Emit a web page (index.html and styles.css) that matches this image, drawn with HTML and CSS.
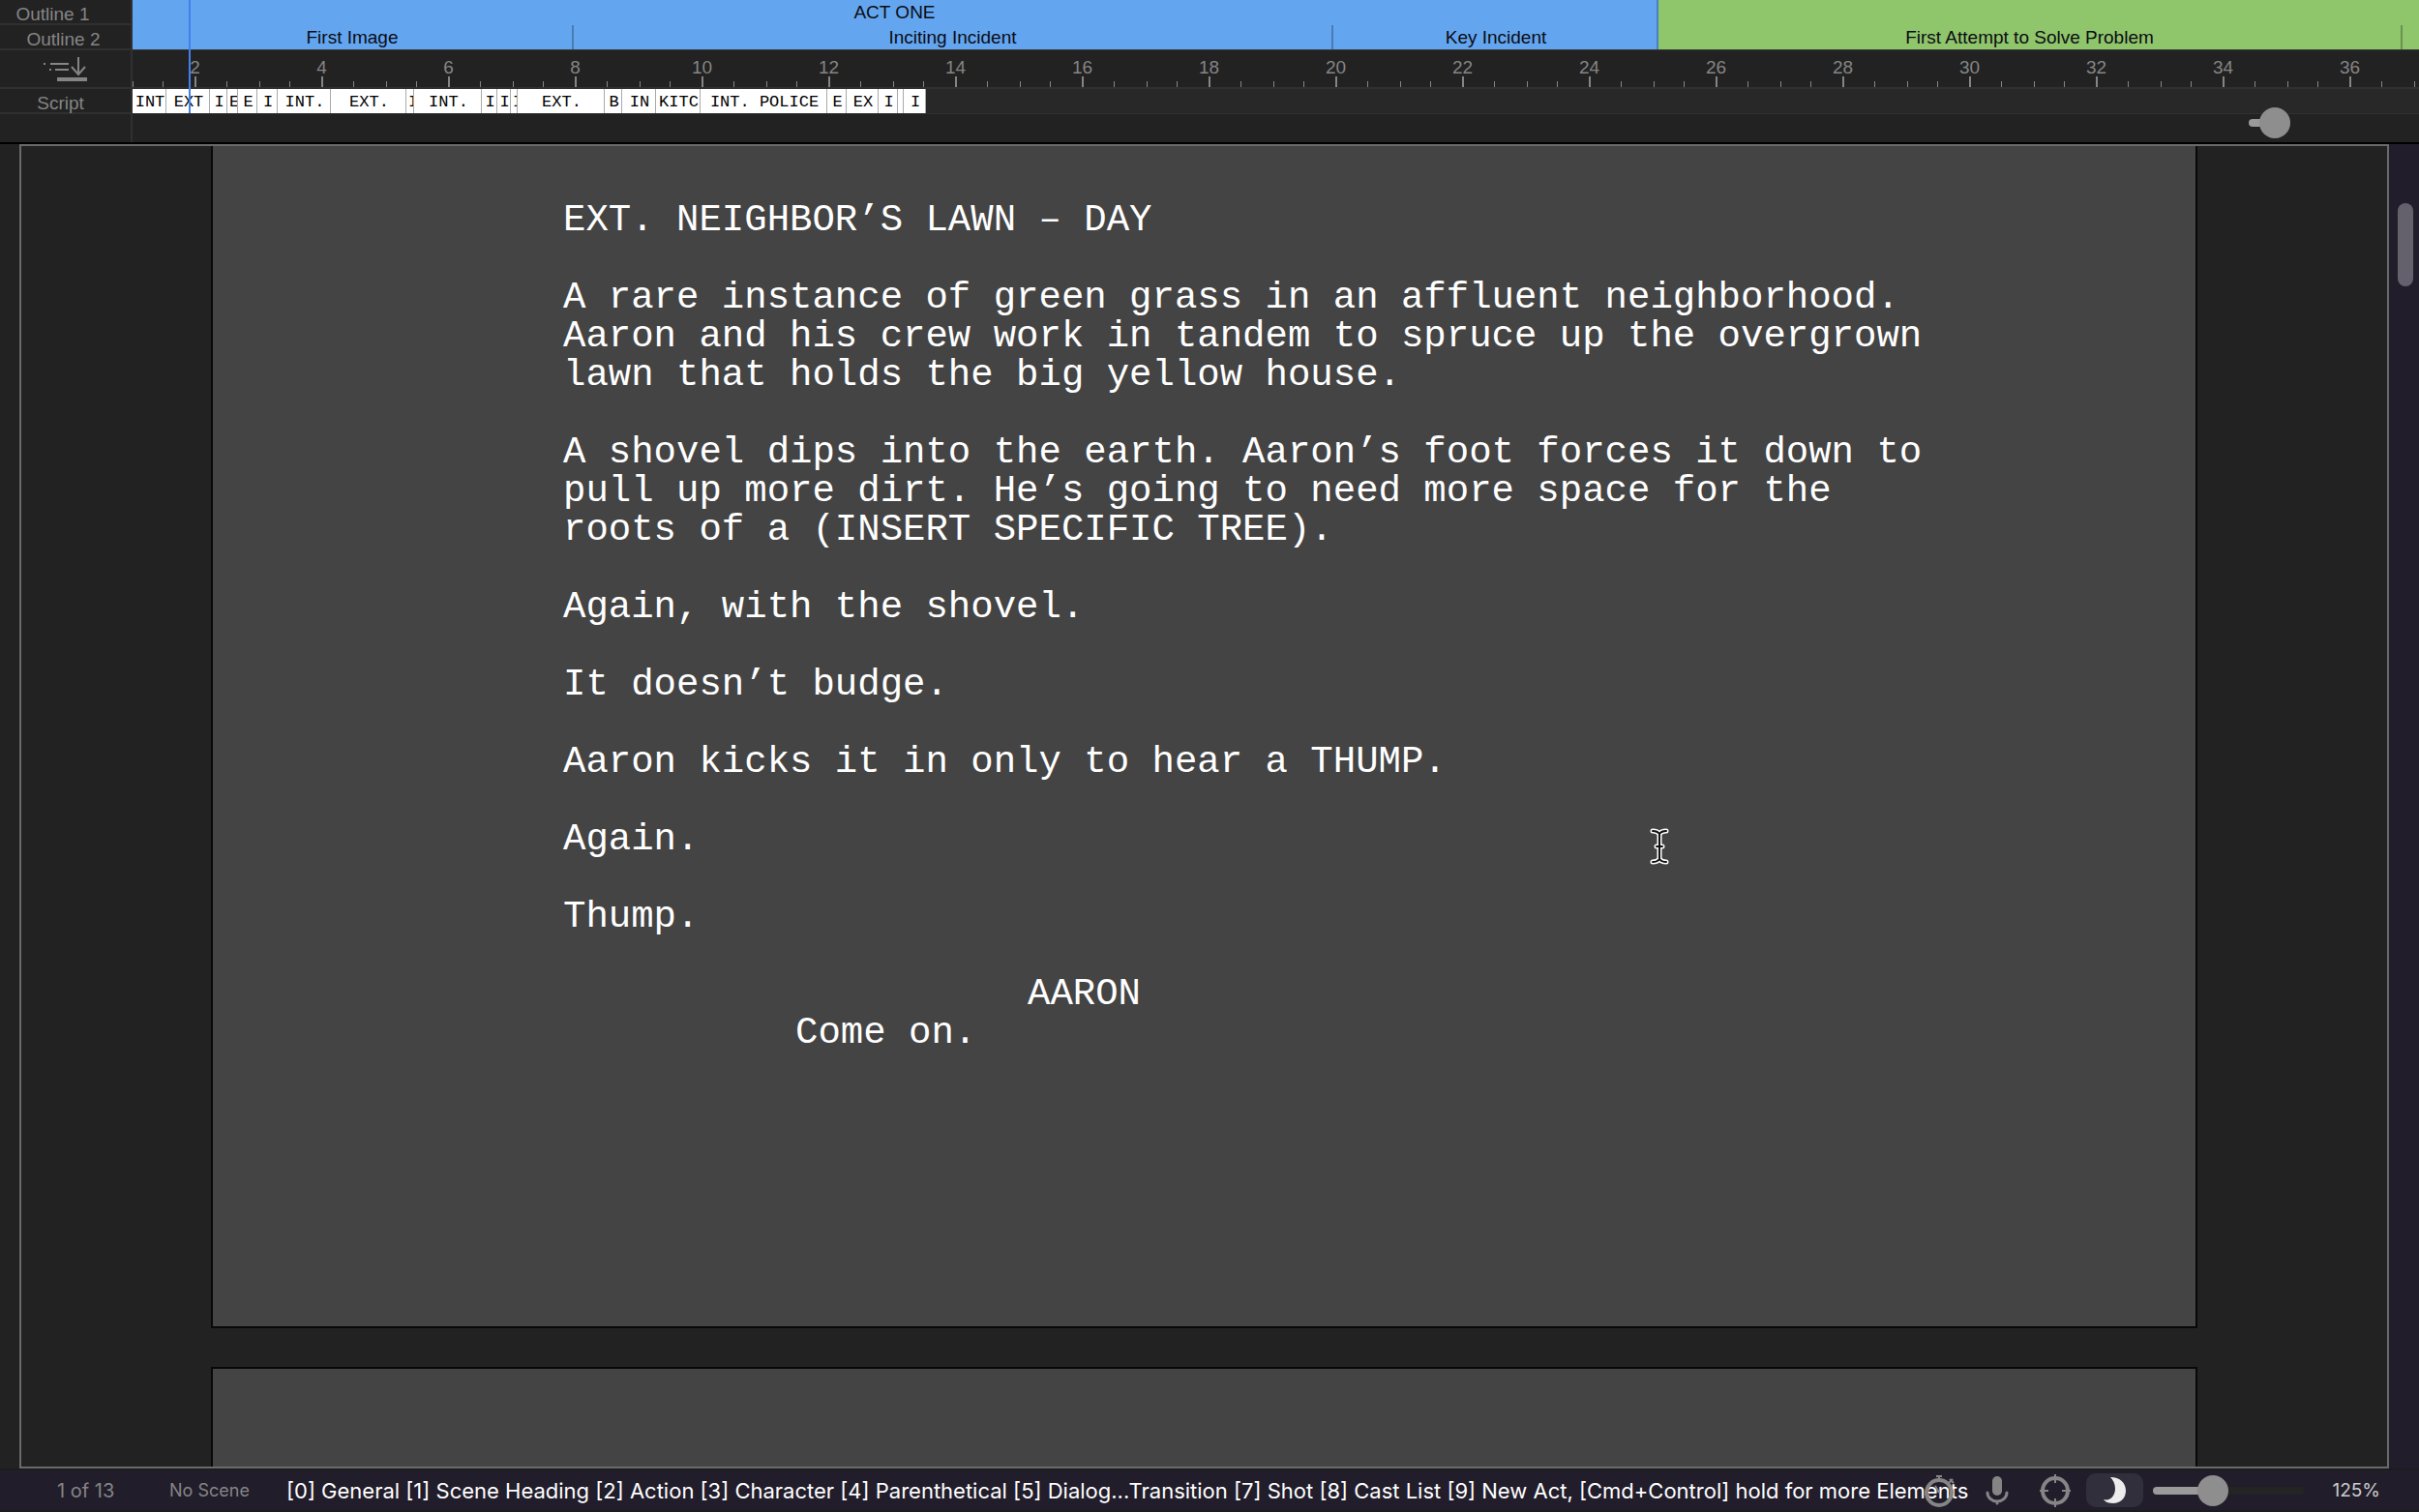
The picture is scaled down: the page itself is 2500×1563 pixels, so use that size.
FILE: index.html
```html
<!DOCTYPE html>
<html lang="en">
<head>
    <meta charset="UTF-8">
    <meta name="viewport" content="width=device-width, initial-scale=1.0">
    <title>Script Editor</title>
    <link rel="stylesheet" href="styles.css">
</head>
<body>

<!-- Timeline -->
<header class="timeline">
    <div class="labels">
        <div class="label label-outline">Outline 1</div>
        <div class="label label-outline nested">Outline 2</div>
        <div class="label label-ruler">
            <button class="icon-button" aria-label="Jump to scene">
                <svg width="46" height="28" viewBox="0 0 46 28" fill="none" stroke="#858585">
                    <path d="M0 9h2M7 9h19M6 15h2M12 15h14" stroke-width="2"/>
                    <path d="M36 2v18M29 12l7 8 7-8" stroke-width="2"/>
                    <path d="M14 25h31" stroke-width="4"/>
                </svg>
            </button>
        </div>
        <div class="label label-script">Script</div>
        <div class="label label-zoom"></div>
    </div>
    <div class="tracks">
        <div class="acts">
            <section class="act act-blue" style="width: 1577px">
                <div class="act-title">ACT ONE</div>
                <div class="beats">
                    <div class="beat" style="width: 456px">First Image</div>
                    <div class="beat" style="width: 785px">Inciting Incident</div>
                    <div class="beat last" style="width: 336px">Key Incident</div>
                </div>
            </section>
            <section class="act act-green">
                <div class="act-title"></div>
                <div class="beats">
                    <div class="beat" style="width: 769px">First Attempt to Solve Problem</div>
                </div>
            </section>
        </div>
        <div class="ruler">
            <span>2</span><span>4</span><span>6</span><span>8</span><span>10</span><span>12</span><span>14</span><span>16</span><span>18</span><span>20</span><span>22</span><span>24</span><span>26</span><span>28</span><span>30</span><span>32</span><span>34</span><span>36</span><span></span>
        </div>
        <div class="scenes">
            <div class="scene" style="width: 35px">INT</div>
            <div class="scene" style="width: 45px">EXT</div>
            <div class="scene" style="width: 18px">I</div>
            <div class="scene" style="width: 11px">E</div>
            <div class="scene" style="width: 20px">E</div>
            <div class="scene" style="width: 21px">I</div>
            <div class="scene" style="width: 55px">INT.</div>
            <div class="scene" style="width: 78px">EXT.</div>
            <div class="scene" style="width: 8px">I</div>
            <div class="scene" style="width: 70px">INT.</div>
            <div class="scene" style="width: 16px">I</div>
            <div class="scene" style="width: 14px">I</div>
            <div class="scene" style="width: 7px">I</div>
            <div class="scene" style="width: 90px">EXT.</div>
            <div class="scene" style="width: 18px">B</div>
            <div class="scene" style="width: 35px">IN</div>
            <div class="scene" style="width: 46px">KITC</div>
            <div class="scene" style="width: 131px">INT. POLICE</div>
            <div class="scene" style="width: 20px">E</div>
            <div class="scene" style="width: 33px">EX</div>
            <div class="scene" style="width: 20px">I</div>
            <div class="scene" style="width: 6px"></div>
            <div class="scene" style="width: 23px">I</div>
        </div>
        <div class="timeline-zoom">
            <input class="slider slider-timeline" type="range" min="0" max="100" value="9" aria-label="Timeline zoom">
        </div>
        <div class="playhead"></div>
    </div>
</header>

<!-- Script pages -->
<main class="workspace">
    <div class="editor">
        <article class="page page-current">
            <p>EXT. NEIGHBOR’S LAWN – DAY</p>
            <p>A rare instance of green grass in an affluent neighborhood.<br>Aaron and his crew work in tandem to spruce up the overgrown<br>lawn that holds the big yellow house.</p>
            <p>A shovel dips into the earth. Aaron’s foot forces it down to<br>pull up more dirt. He’s going to need more space for the<br>roots of a (INSERT SPECIFIC TREE).</p>
            <p>Again, with the shovel.</p>
            <p>It doesn’t budge.</p>
            <p>Aaron kicks it in only to hear a THUMP.</p>
            <p>Again.</p>
            <p>Thump.</p>
            <p class="character">AARON</p>
            <p class="dialogue">Come on.</p>
        </article>
        <article class="page page-next"></article>
        <svg class="cursor" width="20" height="38" viewBox="0 0 20 38" fill="none" stroke-linecap="round">
            <path d="M3 3q5 0 7 3q2-3 7-3M10 6v26M3 35q5 0 7-3q2 3 7 3M7 19h6" stroke="#fff" stroke-width="5"/>
            <path d="M3 3q5 0 7 3q2-3 7-3M10 6v26M3 35q5 0 7-3q2 3 7 3M7 19h6" stroke="#111" stroke-width="2"/>
        </svg>
    </div>
    <div class="scrollbar"><div class="thumb"></div></div>
</main>

<!-- Status bar -->
<footer class="status">
    <span class="page-count">1 of 13</span>
    <span class="scene-name">No Scene</span>
    <span class="hints">[0] General [1] Scene Heading [2] Action [3] Character [4] Parenthetical [5] Dialog...Transition [7] Shot [8] Cast List [9] New Act, [Cmd+Control] hold for more Elements</span>
    <div class="tools">
        <button class="tool" aria-label="Timer">
            <svg width="32" height="36" viewBox="0 0 32 36" fill="none" stroke="#858585" stroke-width="4">
                <circle cx="16" cy="20" r="13"/>
                <path d="M13 3h6M16 3v5M26 10l4-4M27 6l4 4M16 20l-4-7" stroke-width="2"/>
            </svg>
        </button>
        <button class="tool" aria-label="Dictate">
            <svg width="26" height="36" viewBox="0 0 26 36" fill="none" stroke="#858585">
                <path d="M13 8v10" stroke-width="10" stroke-linecap="round"/>
                <path d="M3 20a10 9 0 0 0 20 0M13 29v2" stroke-width="3" stroke-linecap="round"/>
            </svg>
        </button>
        <button class="tool" aria-label="Focus mode">
            <svg width="34" height="36" viewBox="0 0 34 36" fill="none" stroke="#858585">
                <circle cx="17" cy="18" r="13" stroke-width="4"/>
                <path d="M17 1v9M17 26v9M1 18h9M24 18h9" stroke-width="2"/>
            </svg>
        </button>
        <button class="tool tool-active" aria-label="Night mode">
            <svg width="23" height="27" viewBox="0 0 23 27">
                <path d="M7 0C17 0 23 6 23 14C23 22 17 27 10 27C6 27 2 26 0 23C7 25 12 19 12 12C12 7 10 3 7 0z" fill="#ececec"/>
            </svg>
        </button>
    </div>
    <input class="slider slider-page" type="range" min="0" max="100" value="37" aria-label="Page zoom">
    <span class="percent">125%</span>
</footer>

</body>
</html>
```

FILE: styles.css
```css
* {
    box-sizing: border-box;
}
body {
    display: flex;
    flex-direction: column;
    height: 100vh;
    margin: 0;
    overflow: hidden;
    background-color: #222;
    color: #858585;
    font-family: "Liberation Sans", Arial, sans-serif;
    font-size: 19px;
}
button {
    padding: 0;
    border: none;
    background: none;
    cursor: pointer;
}
svg {
    display: block;
}

/* Timeline */
.timeline {
    display: flex;
    flex: none;
    border-bottom: 2px solid #000;
}
.labels {
    flex: none;
    width: 137px;
    border-right: 2px solid #303030;
}
.label {
    display: flex;
    align-items: center;
    justify-content: center;
    border-bottom: 2px solid #303030;
}
.label-outline {
    height: 26px;
    padding: 6px 26px 0 0;
}
.nested {
    padding: 6px 4px 0 0;
}
.label-ruler {
    height: 40px;
}
.label-script {
    height: 26px;
    padding: 6px 10px 0 0;
}
.label-zoom {
    height: 29px;
    border-bottom: none;
}
.tracks {
    position: relative;
    flex: 1;
    min-width: 0;
    overflow: hidden;
}
.acts {
    display: flex;
    height: 51px;
    color: #0c0c14;
}
.act {
    flex: none;
}
.act-blue {
    background-color: #63a6ef;
    border-right: 2px solid #4681c4;
}
.act-green {
    flex: 1;
    background-color: #8fc56b;
}
.act-title {
    height: 26px;
    line-height: 26px;
    text-align: center;
}
.beats {
    display: flex;
}
.beat {
    flex: none;
    height: 25px;
    border-right: 2px solid rgba(0, 0, 0, 0.25);
    line-height: 25px;
    text-align: center;
}
.last {
    border-right: none;
}
.ruler {
    display: flex;
    height: 41px;
    border-top: 1px solid #3a3a3a;
    border-bottom: 2px solid #303030;
}
.ruler span {
    flex: none;
    width: 131px;
    padding: 7px 2px 0 0;
    line-height: 22px;
    text-align: center;
    background-image: linear-gradient(#858585, #858585), linear-gradient(#858585, #858585), linear-gradient(#858585, #858585), linear-gradient(#858585, #858585);
    background-repeat: no-repeat;
    background-position: 0 32px, 31px 32px, 64px 27px, 97px 32px;
    background-size: 1px 6px, 1px 6px, 2px 11px, 1px 6px;
}
.scenes {
    display: flex;
    height: 26px;
    border-bottom: 1px solid #303030;
    background-color: #282828;
}
.scene {
    flex: none;
    padding-left: 2px;
    overflow: hidden;
    border-right: 1px solid #aaa;
    background-color: #fff;
    color: #000;
    font-family: "Liberation Mono", "Courier New", monospace;
    font-size: 17px;
    line-height: 27px;
    text-align: center;
    white-space: nowrap;
}
.timeline-zoom {
    display: flex;
    justify-content: flex-end;
    padding: 0 18px;
}
.playhead {
    position: absolute;
    top: 0;
    left: 58px;
    width: 2px;
    height: 117px;
    background-color: #4580e8;
}

/* Sliders */
.slider {
    margin: 0;
    background: none;
    appearance: none;
    -webkit-appearance: none;
}
.slider::-webkit-slider-runnable-track {
    height: 8px;
    border-radius: 4px;
}
.slider::-webkit-slider-thumb {
    width: 32px;
    height: 32px;
    margin-top: -12px;
    border-radius: 50%;
    background-color: #8e8e8e;
    -webkit-appearance: none;
}
.slider-timeline {
    width: 158px;
    height: 18px;
}
.slider-timeline::-webkit-slider-runnable-track {
    background: linear-gradient(90deg, #9a9a9a 16%, #222 16%);
}
.slider-page {
    width: 156px;
    height: 32px;
}
.slider-page::-webkit-slider-runnable-track {
    background: linear-gradient(90deg, #9a9a9a 39%, #242424 39%);
}

/* Script pages */
.workspace {
    display: flex;
    flex: 1;
    min-height: 0;
    padding-left: 20px;
}
.editor {
    position: relative;
    display: flex;
    flex: 1;
    flex-direction: column;
    gap: 40px;
    padding: 0 196px;
    overflow: hidden;
    border: 2px solid #6a6a6a;
}
.page {
    flex: none;
    height: 1222px;
    border: 2px solid #080808;
    background-color: #444;
}
.page-current {
    padding: 57px 280px 0 362px;
    border-top: none;
    color: #fff;
    font-family: "Liberation Mono", "Courier New", monospace;
    font-size: 39px;
    line-height: 40px;
}
.page p {
    margin: 0 0 40px;
    white-space: nowrap;
}
.page .character {
    margin: 0;
    padding-left: 480px;
}
.page .dialogue {
    padding-left: 240px;
}
.cursor {
    position: absolute;
    top: 705px;
    left: 1683px;
}
.scrollbar {
    flex: none;
    width: 31px;
    padding: 61px 6px 0 9px;
    background-color: #211d2b;
}
.thumb {
    height: 86px;
    border-radius: 8px;
    background-color: #65616c;
}

/* Status bar */
.status {
    display: flex;
    flex: none;
    align-items: center;
    height: 45px;
    padding: 0 40px 0 59px;
    border-top: 2px solid #1c1c1c;
    border-bottom: 2px solid #1c1c1c;
    background-color: #211d2b;
    font-family: Inter, "Liberation Sans", sans-serif;
    font-size: 19px;
    white-space: nowrap;
}
.page-count {
    width: 116px;
    font-size: 20px;
}
.scene-name {
    width: 121px;
    font-size: 18px;
}
.hints {
    flex: 1;
    min-width: 0;
    color: #fff;
    font-size: 22px;
}
.tools {
    display: flex;
    align-items: center;
    gap: 4px;
    margin-right: 10px;
}
.tool {
    display: flex;
    align-items: center;
    justify-content: center;
    width: 56px;
}
.tool-active {
    width: 59px;
    height: 35px;
    border-radius: 10px;
    background-color: #322f3c;
}
.percent {
    margin-left: 29px;
    color: #ccc;
}
```
